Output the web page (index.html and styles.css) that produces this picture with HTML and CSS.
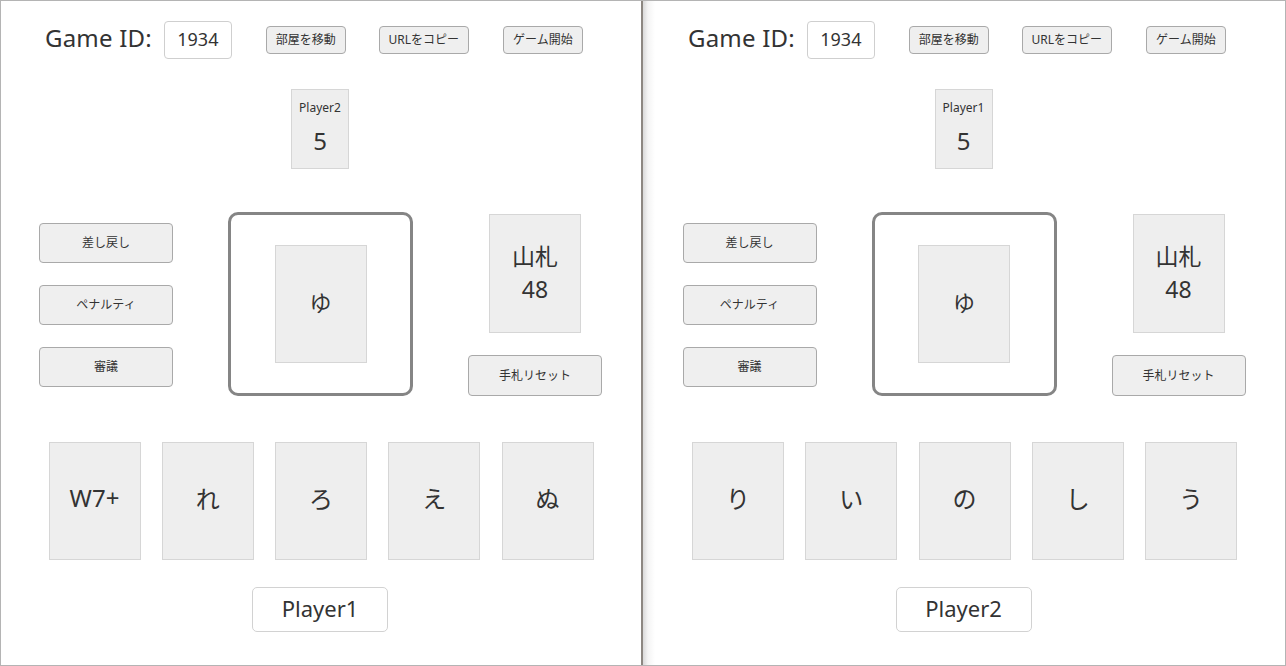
FILE: index.html
```html
<!DOCTYPE html>
<html lang="ja">
<head>
<meta charset="utf-8">
<title>Game</title>
<link rel="stylesheet" href="styles.css">
</head>
<body>
<div class="frame">
  <section class="panel">
    <header class="header">
      <span class="gid-label">Game ID:</span>
      <span class="gid-input">1934</span>
      <button class="btn btn-top">部屋を移動</button>
      <button class="btn btn-top btn-wide">URLをコピー</button>
      <button class="btn btn-top">ゲーム開始</button>
    </header>
    <div class="opponent">
      <div class="opp-card">
        <span class="opp-name">Player2</span>
        <span class="opp-count">5</span>
      </div>
    </div>
    <div class="table">
      <div class="side-left">
        <button class="btn btn-side">差し戻し</button>
        <button class="btn btn-side">ペナルティ</button>
        <button class="btn btn-side">審議</button>
      </div>
      <div class="pile">
        <div class="card">ゆ</div>
      </div>
      <div class="side-right">
        <div class="card deck">山札<br>48</div>
        <button class="btn btn-side btn-reset">手札リセット</button>
      </div>
    </div>
    <div class="hand">
      <div class="card">W7+</div>
      <div class="card">れ</div>
      <div class="card">ろ</div>
      <div class="card">え</div>
      <div class="card">ぬ</div>
    </div>
    <div class="me">
      <div class="me-label">Player1</div>
    </div>
  </section>
  <div class="divider"></div>
  <section class="panel panel-right">
    <header class="header">
      <span class="gid-label">Game ID:</span>
      <span class="gid-input">1934</span>
      <button class="btn btn-top">部屋を移動</button>
      <button class="btn btn-top btn-wide">URLをコピー</button>
      <button class="btn btn-top">ゲーム開始</button>
    </header>
    <div class="opponent">
      <div class="opp-card">
        <span class="opp-name">Player1</span>
        <span class="opp-count">5</span>
      </div>
    </div>
    <div class="table">
      <div class="side-left">
        <button class="btn btn-side">差し戻し</button>
        <button class="btn btn-side">ペナルティ</button>
        <button class="btn btn-side">審議</button>
      </div>
      <div class="pile">
        <div class="card">ゆ</div>
      </div>
      <div class="side-right">
        <div class="card deck">山札<br>48</div>
        <button class="btn btn-side btn-reset">手札リセット</button>
      </div>
    </div>
    <div class="hand">
      <div class="card">り</div>
      <div class="card">い</div>
      <div class="card">の</div>
      <div class="card">し</div>
      <div class="card">う</div>
    </div>
    <div class="me">
      <div class="me-label">Player2</div>
    </div>
  </section>
</div>
</body>
</html>
```

FILE: styles.css
```css
* { box-sizing: border-box; }
html, body { margin: 0; padding: 0; background: #fff; }
body {
  font-family: "Noto Sans", "Noto Sans CJK JP", sans-serif;
  color: #333;
}
.frame {
  width: 1286px;
  height: 666px;
  border: 1px solid #b4b4b4;
  display: flex;
  overflow: hidden;
}
.panel {
  width: 640px;
  flex: none;
  display: flex;
  flex-direction: column;
}
.panel-right {
  width: 642px;
  padding-left: 1px;
  background: linear-gradient(to right, #d9d9d9 0, #f4f4f4 5px, #fff 12px);
}
.divider {
  width: 2px;
  flex: none;
  background: #8c8781;
}
.header {
  display: flex;
  align-items: center;
  padding: 20px 0 0 44px;
  height: 58px;
}
.gid-label {
  font-size: 24px;
  line-height: 30px;
  margin-right: 12px;
  padding-bottom: 5px;
  letter-spacing: 0.2px;
}
.gid-input {
  width: 68px;
  height: 38px;
  border: 1px solid #cfcfcf;
  border-radius: 4px;
  font-size: 18px;
  display: flex;
  align-items: center;
  justify-content: center;
  padding-bottom: 2px;
}
.btn {
  font-family: inherit;
  background: #efefef;
  border: 1px solid #a9a9a9;
  border-radius: 4px;
  color: #333;
  font-size: 12px;
  padding: 0 0 2px 0;
  cursor: pointer;
}
.btn-top {
  width: 80px;
  height: 28px;
  margin-left: 34px;
}
.btn-wide { width: 90px; margin-left: 33px; }
.opponent {
  display: flex;
  justify-content: center;
  margin-top: 30px;
  padding-right: 2px;
}
.opp-card {
  width: 58px;
  height: 80px;
  background: #eee;
  border: 1px solid #d6d6d6;
  display: flex;
  flex-direction: column;
  align-items: center;
  padding-top: 9px;
}
.opp-name { font-size: 12px; line-height: 17px; }
.opp-count { font-size: 24px; line-height: 33px; margin-top: 8px; }
.table {
  display: flex;
  justify-content: center;
  align-items: center;
  gap: 55px;
  margin-top: 43px;
  padding-right: 1px;
}
.side-left, .side-right {
  display: flex;
  flex-direction: column;
  align-items: center;
  width: 134px;
}
.side-left { gap: 22px; margin-top: 1px; }
.side-right { gap: 22px; align-self: flex-start; margin-top: 2px; }
.btn-side {
  width: 134px;
  height: 40px;
}
.btn-reset { height: 41px; }
.pile {
  width: 185px;
  height: 184px;
  border: 3px solid #858585;
  border-radius: 10px;
  display: flex;
  align-items: center;
  justify-content: center;
}
.card {
  width: 92px;
  height: 118px;
  background: #eee;
  border: 1px solid #d6d6d6;
  display: flex;
  align-items: center;
  justify-content: center;
  text-align: center;
  font-size: 22px;
  padding-bottom: 7px;
}
.deck { font-size: 23px; line-height: 33px; height: 119px; padding-bottom: 1px; }
.hand {
  display: flex;
  justify-content: center;
  gap: 21.25px;
  margin-top: 46px;
}
.hand .card { font-size: 24px; }
.me {
  display: flex;
  justify-content: center;
  margin-top: 27px;
  padding-right: 2px;
}
.me-label {
  width: 136px;
  height: 45px;
  border: 1px solid #d2d2d2;
  border-radius: 5px;
  font-size: 22px;
  display: flex;
  align-items: center;
  justify-content: center;
  padding-bottom: 4px;
}
```
